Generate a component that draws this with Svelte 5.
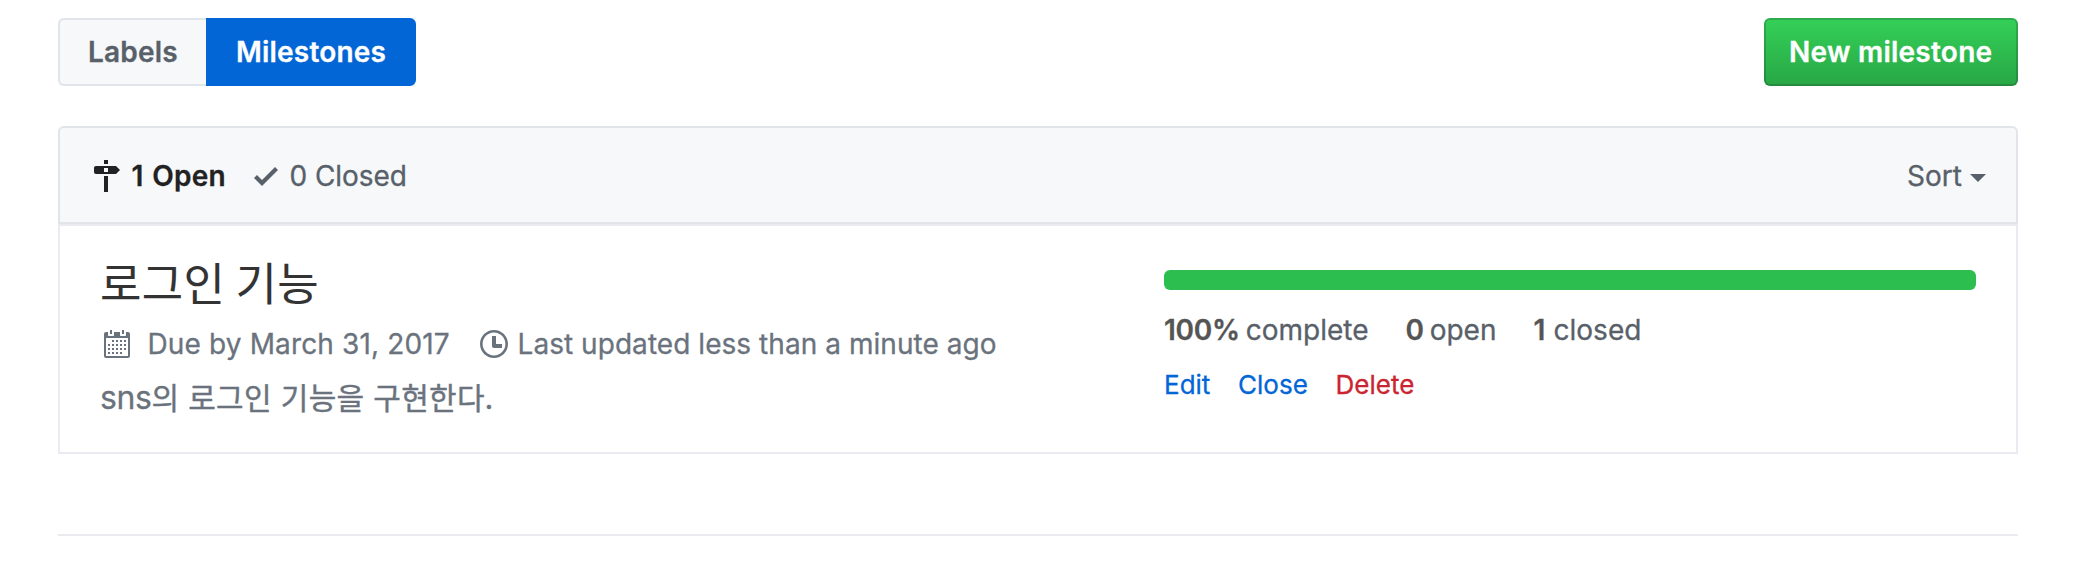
<script>
  const progress = 100;
  const stats = [
    { value: '100%', label: 'complete' },
    { value: '0', label: 'open' },
    { value: '1', label: 'closed' }
  ];
</script>

<main class="page">
  <header class="toolbar">
    <nav class="tabs">
      <a class="tab tab-labels">Labels</a>
      <a class="tab tab-active">Milestones</a>
    </nav>
    <button class="new-button">New milestone</button>
  </header>

  <section class="table">
    <div class="table-header">
      <a class="state state-open">
        <svg width="28" height="32" viewBox="0 0 14 16"><path fill-rule="evenodd" d="M8 2H6V0h2v2zm4 5H2c-.55 0-1-.45-1-1V4c0-.55.45-1 1-1h10l2 2-2 2zM8 4H6v2h2V4zM6 16h2V8H6v8z" /></svg>
        <span>1 Open</span>
      </a>
      <a class="state state-closed">
        <svg width="24" height="32" viewBox="0 0 12 16"><path fill-rule="evenodd" d="M12 5l-8 8-4-4 1.5-1.5L4 10l6.5-6.5L12 5z" /></svg>
        <span>0 Closed</span>
      </a>
      <a class="sort">Sort<i class="caret"></i></a>
    </div>

    <div class="row">
      <div class="info">
        <h2 class="title">로그인 기능</h2>
        <div class="meta">
          <svg class="calendar" width="28" height="32" viewBox="0 0 14 16"><path fill-rule="evenodd" d="M13 2h-1v1.5c0 .28-.22.5-.5.5h-2c-.28 0-.5-.22-.5-.5V2H6v1.5c0 .28-.22.5-.5.5h-2c-.28 0-.5-.22-.5-.5V2H2c-.55 0-1 .45-1 1v11c0 .55.45 1 1 1h11c.55 0 1-.45 1-1V3c0-.55-.45-1-1-1zm0 12H2V5h11v9zM5 3H4V1h1v2zm6 0h-1V1h1v2zM6 7H5V6h1v1zm2 0H7V6h1v1zm2 0H9V6h1v1zm2 0h-1V6h1v1zM4 9H3V8h1v1zm2 0H5V8h1v1zm2 0H7V8h1v1zm2 0H9V8h1v1zm2 0h-1V8h1v1zm-8 2H3v-1h1v1zm2 0H5v-1h1v1zm2 0H7v-1h1v1zm2 0H9v-1h1v1zm2 0h-1v-1h1v1zm-8 2H3v-1h1v1zm2 0H5v-1h1v1zm2 0H7v-1h1v1zm2 0H9v-1h1v1z" /></svg>
          <span class="due">Due by March 31, 2017</span>
          <svg class="clock" width="28" height="32" viewBox="0 0 14 16"><path fill-rule="evenodd" d="M8 8h3v2H7c-.55 0-1-.45-1-1V4h2v4zM7 2.3c3.14 0 5.7 2.56 5.7 5.7s-2.56 5.7-5.7 5.7A5.71 5.71 0 0 1 1.3 8c0-3.14 2.56-5.7 5.7-5.7zM7 1C3.14 1 0 4.14 0 8s3.14 7 7 7 7-3.14 7-7-3.14-7-7-7z" /></svg>
          <span class="updated">Last updated less than a minute ago</span>
        </div>
        <p class="description"><span class="latin">sns</span>의 로그인 기능을 구현한다.</p>
      </div>

      <div class="status">
        <div class="progress"><div class="bar" style="width: {progress}%"></div></div>
        <div class="stats">
          {#each stats as s}
            <span class="stat"><strong>{s.value}</strong><span>{s.label}</span></span>
          {/each}
        </div>
        <div class="actions">
          <a>Edit</a>
          <a>Close</a>
          <a class="delete">Delete</a>
        </div>
      </div>
    </div>
  </section>

  <hr />
</main>

<style>
  :global(body) {
    background: #fff;
  }

  .page {
    box-sizing: border-box;
    height: 566px;
    padding: 18px 74px 0 58px;
    overflow: hidden;
    font: 400 28px/42px Inter, "Noto Sans CJK KR", sans-serif;
    color: #586069;
    white-space: nowrap;
    -webkit-text-stroke: 0.3px;
  }

  svg {
    display: block;
    flex: none;
    fill: currentColor;
  }

  .toolbar {
    display: flex;
    justify-content: space-between;
    height: 68px;
    font-weight: 600;
    letter-spacing: 0.2px;
  }

  .tabs {
    display: flex;
  }

  .tab,
  .new-button {
    box-sizing: border-box;
    height: 68px;
    line-height: 64px;
    border: 2px solid #e1e4e8;
  }

  .tab-labels {
    width: 148px;
    padding-left: 28px;
    border-right: 0;
    border-radius: 6px 0 0 6px;
    background: #f6f8fa;
  }

  .tab-active {
    width: 210px;
    padding-left: 28px;
    border-color: #0366d6;
    border-radius: 0 6px 6px 0;
    background: #0366d6;
    color: #fff;
  }

  .new-button {
    width: 254px;
    padding: 0 0 0 23px;
    border-color: rgba(27, 31, 35, 0.2);
    border-radius: 6px;
    background: linear-gradient(#34d058, #28a745) border-box;
    color: #fff;
    font: inherit;
    line-height: 64px;
    letter-spacing: 0.25px;
    text-align: left;
  }

  .table {
    margin-top: 40px;
  }

  .table-header {
    box-sizing: border-box;
    display: flex;
    align-items: center;
    height: 98px;
    padding: 2px 30px 0 32px;
    border: 2px solid #e1e4e8;
    border-radius: 6px 6px 0 0;
    background: #f6f8fa;
  }

  .state {
    display: flex;
    align-items: center;
  }

  .state-open {
    width: 162px;
    color: #222;
    font-weight: 600;
    letter-spacing: 0.2px;
    word-spacing: 1.5px;
  }

  .state-open span {
    margin-left: 11.5px;
  }

  .state-closed span {
    margin-left: 11.5px;
    letter-spacing: -0.05px;
  }

  .sort {
    display: flex;
    align-items: center;
    margin-left: auto;
  }

  .caret {
    margin: 4px 0 0 8px;
    border: 8px solid transparent;
    border-top-color: currentColor;
    border-bottom: 0;
  }

  .row {
    box-sizing: border-box;
    display: flex;
    height: 230px;
    padding: 0 40px;
    border: 2px solid #eaebf0;
  }

  .info {
    width: 1064px;
    color: #6a737d;
  }

  .title {
    margin: 24px 0 0;
    height: 64px;
    color: #333;
    font: 400 45px/64px "Noto Sans CJK KR", sans-serif;
    letter-spacing: 0.3px;
    -webkit-text-stroke: 0.1px;
  }

  .meta {
    display: flex;
    align-items: center;
    height: 42px;
    margin-top: 9px;
  }

  .calendar {
    margin-left: 2px;
  }

  .due {
    width: 332.5px;
    margin-left: 17.5px;
    letter-spacing: 0.14px;
  }

  .updated {
    margin-left: 9.5px;
    letter-spacing: 0.05px;
  }

  .description {
    height: 48px;
    margin: 6.5px 0 0;
    font: 400 30px/48px "Noto Sans CJK KR", sans-serif;
    letter-spacing: 0.3px;
    word-spacing: 1.8px;
    -webkit-text-stroke: 0.4px;
  }

  .latin {
    font: 400 32px/32px Inter, sans-serif;
    letter-spacing: -0.4px;
    -webkit-text-stroke: 0.3px;
  }

  .status {
    width: 812px;
    padding-top: 44px;
  }

  .progress {
    height: 20px;
    border-radius: 6px;
    background: #eaebf0;
    overflow: hidden;
  }

  .bar {
    height: 100%;
    background: #2cbe4e;
  }

  .stats {
    display: flex;
    gap: 37px;
    margin-top: 19px;
  }

  .stat {
    display: flex;
    gap: 6px;
  }

  .stat:last-child {
    gap: 8.5px;
  }

  strong {
    color: #555;
    font-weight: 600;
    letter-spacing: -0.3px;
  }

  .actions {
    display: flex;
    gap: 27.7px;
    margin-top: 14px;
    color: #0366d6;
    font-size: 26px;
    line-height: 40px;
  }

  .delete {
    color: #cb2431;
  }

  hr {
    height: 2px;
    margin: 80px 0 0;
    border: 0;
    background: #eaebf0;
  }
</style>
